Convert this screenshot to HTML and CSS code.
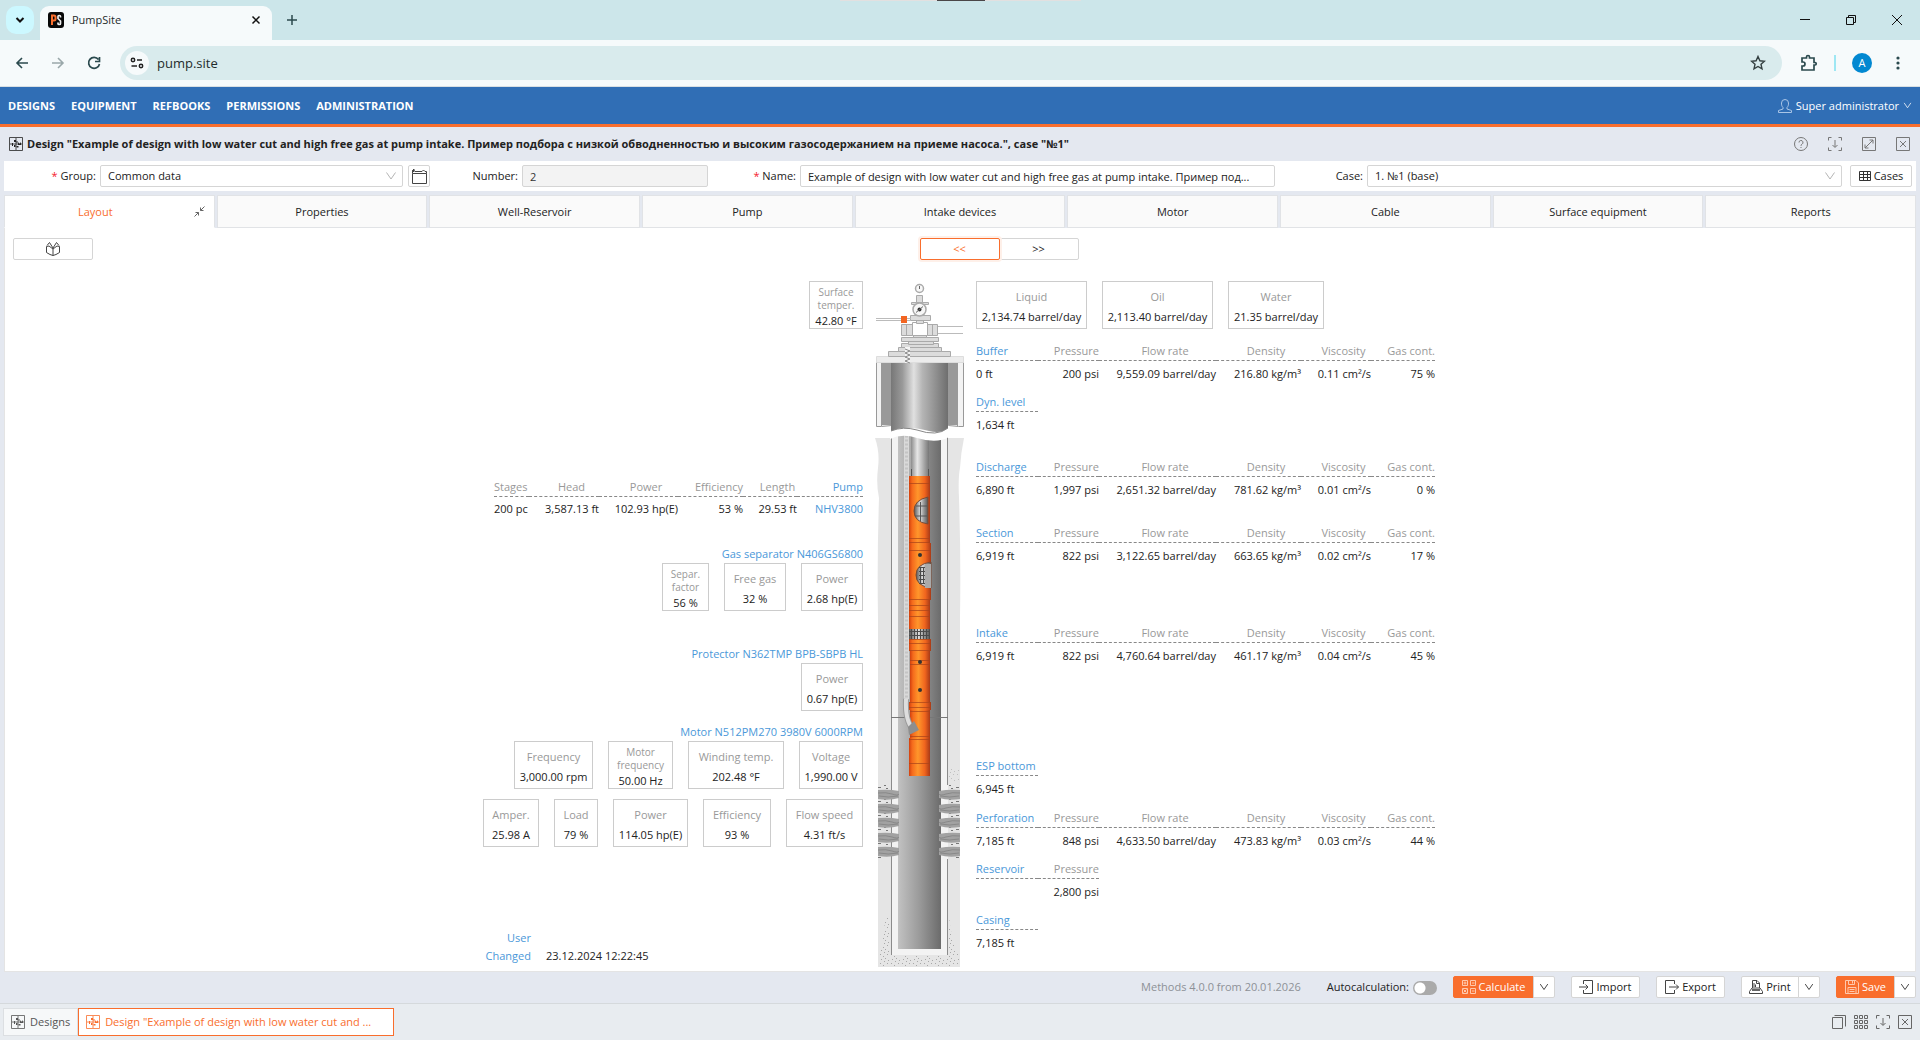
FILE: index.html
```html
<!DOCTYPE html>
<html lang="en">
<head>
<meta charset="utf-8">
<title>PumpSite</title>
<link rel="stylesheet" href="styles.css">
</head>
<body>
<svg class="defs" aria-hidden="true">
  <defs>
    <symbol id="i-design" viewBox="0 0 14 14"><path d="M.5.5h13v13H.5zM7 1v12M1 7h12" fill="none" stroke="currentColor" stroke-width=".8"/><path d="M5 3h2v2H5zM7.500 4h1v2h-1zM9 5l1.500 2L12 5v3H9zM3 6h1v3H3zM5 8h1.500v2H5zM7.500 9h2v1.500h-2z" fill="currentColor"/></symbol>
    <symbol id="i-down" viewBox="0 0 12 12"><path d="M1.500 2.500 6 9l4.500-6.500" fill="none" stroke="currentColor"/></symbol>
    <symbol id="i-minimize" viewBox="0 0 14 14"><path d="M.5 3.500v-3h3M10.500.5h3v3M13.500 10.500v3h-3M3.500 13.500h-3v-3M7 3v7M4.500 8 7 10.500 9.500 8" fill="none" stroke="currentColor"/></symbol>
    <symbol id="i-closebox" viewBox="0 0 14 14"><path d="M.5.5h13v13H.5zM4 4l6 6M10 4l-6 6" fill="none" stroke="currentColor"/></symbol>
  </defs>
</svg>

<header class="browser">
  <div class="tabstrip">
    <button class="tabsearch" aria-label="Search tabs"><svg width="10" height="10" viewBox="0 0 10 10"><path d="M1.500 3 5 6.500 8.500 3" fill="none" stroke="#111" stroke-width="2"/></svg></button>
    <div class="browsertab">
      <svg width="16" height="16" viewBox="0 0 16 16"><rect width="16" height="16" rx="3" fill="#080808"/><path d="M4 13V3.500h2a1.500 1.500 0 0 1 1.500 1.500v2A1.500 1.500 0 0 1 6 8.500H4" fill="none" stroke="#f96e2d" stroke-width="2"/><path d="M12.500 5.500V4.500a1 1 0 0 0-1-1h-.5a1 1 0 0 0-1 1v2l2.500 2.500v2.500a1 1 0 0 1-1 1H11a1 1 0 0 1-1-1v-1" fill="none" stroke="#eee" stroke-width="1.700"/></svg>
      <span class="browsertab-title">PumpSite</span>
      <svg width="10" height="10" viewBox="0 0 10 10"><path d="M1.500 1.500l7 7M8.500 1.500l-7 7" stroke="#111" stroke-width="1.500"/></svg>
    </div>
    <button class="plain" aria-label="New tab"><svg width="12" height="12" viewBox="0 0 12 12"><path d="M6 1v10M1 6h10" stroke="#2b4a4e" stroke-width="1.500"/></svg></button>
    <div class="winbuttons">
      <svg width="12" height="12" viewBox="0 0 12 12"><path d="M1 5.500h10" stroke="#111"/></svg>
      <svg width="12" height="12" viewBox="0 0 12 12"><path d="M1.500 3.500h7v7h-7zM3.500 3.500v-2h7v7h-2" fill="none" stroke="#111"/></svg>
      <svg width="12" height="12" viewBox="0 0 12 12"><path d="M1 1l10 10M11 1 1 11" stroke="#111"/></svg>
    </div>
    <div class="grabber"><span></span></div>
  </div>
  <div class="addressbar">
    <div class="navbuttons">
      <svg width="16" height="16" viewBox="0 0 16 16"><path d="M14 8H3M8 3 3 8l5 5" fill="none" stroke="#2b4a4e" stroke-width="1.600"/></svg>
      <svg width="16" height="16" viewBox="0 0 16 16"><path d="M2 8h11M8 3l5 5-5 5" fill="none" stroke="#9aa8aa" stroke-width="1.600"/></svg>
      <svg width="16" height="16" viewBox="0 0 16 16"><path d="M12.500 4.500A5.500 5.500 0 1 0 13.500 9M13.500 2v4.500H9" fill="none" stroke="#2b4a4e" stroke-width="1.700"/></svg>
    </div>
    <div class="omnibox">
      <span class="siteinfo"><svg width="14" height="12" viewBox="0 0 14 12"><g fill="none" stroke="#222" stroke-width="1.500"><circle cx="3" cy="3" r="1.700"/><path d="M7 3h5M1.500 9H7"/><circle cx="11" cy="9" r="1.700"/></g></svg></span>
      <span class="url">pump.site</span>
      <svg width="16" height="16" viewBox="0 0 16 16"><path d="M8 1.500l1.900 4.300 4.600.4-3.500 3.100 1 4.600L8 11.500l-4 2.400 1-4.600L1.500 6.200l4.600-.4z" fill="none" stroke="#333f40" stroke-width="1.400"/></svg>
    </div>
    <div class="extras">
      <svg width="18" height="18" viewBox="0 0 18 18"><path d="M2 4h4.500V3a1.500 1.500 0 0 1 3 0v1H14v4.500h1a1.200 1.200 0 0 1 0 2.500h-1V16H2v-4h1a1.800 1.800 0 0 0 0-4H2z" fill="none" stroke="#2b4a4e" stroke-width="1.700"/></svg>
      <span class="extras-line"></span>
      <span class="avatar">A</span>
      <svg width="6" height="14" viewBox="0 0 6 14"><g fill="#2b4a4e"><circle cx="3" cy="2" r="1.600"/><circle cx="3" cy="7" r="1.600"/><circle cx="3" cy="12" r="1.600"/></g></svg>
    </div>
  </div>
</header>

<nav class="mainnav">
  <a href="#">DESIGNS</a><a href="#">EQUIPMENT</a><a href="#">REFBOOKS</a><a href="#">PERMISSIONS</a><a href="#">ADMINISTRATION</a>
  <button class="user"><svg width="14" height="14" viewBox="0 0 14 14"><path d="M5 8.500C3.500 7 3.500 5.500 3.500 4a3.500 3.500 0 0 1 7 0c0 1.500 0 3-1.500 4.500v1.500l4.500 1.500v2H.5v-2L5 10z" fill="none" stroke="#a9c5e6"/></svg>Super administrator<svg width="9" height="9" viewBox="0 0 12 12"><use href="#i-down"/></svg></button>
</nav>

<main class="window">
  <div class="titlebar">
    <svg width="14" height="14"><use href="#i-design"/></svg>
    <h1>Design "Example of design with low water cut and high free gas at pump intake. Пример подбора с низкой обводненностью и высоким газосодержанием на приеме насоса.", case "№1"</h1>
    <div class="titleicons">
      <button class="plain" aria-label="Help"><svg width="14" height="14" viewBox="0 0 14 14"><circle cx="7" cy="7" r="6.500" fill="none" stroke="currentColor"/><path d="M5 5.500a2 2 0 1 1 3 1.700c-.8.500-1 .8-1 1.600M7 10v1" fill="none" stroke="currentColor"/></svg></button>
      <button class="plain" aria-label="Minimize"><svg width="14" height="14"><use href="#i-minimize"/></svg></button>
      <button class="plain" aria-label="Restore"><svg width="14" height="14" viewBox="0 0 14 14"><path d="M.5.500h13v13H.5zM3 11l8-8M7.500 3H11v3.500M3 7.500V11h3.500" fill="none" stroke="currentColor"/></svg></button>
      <button class="plain" aria-label="Close"><svg width="14" height="14"><use href="#i-closebox"/></svg></button>
    </div>
  </div>

  <form class="fields">
    <div class="field field-group">
      <label for="group"><span class="required">*</span> Group:</label>
      <span class="select"><select id="group"><option>Common data</option></select><svg width="12" height="12"><use href="#i-down"/></svg></span>
      <button type="button" class="btn btn-square" aria-label="Open group"><svg width="15" height="15" viewBox="0 0 15 15"><path d="M.5 4.500h14v10H.5zM.5 4.500v-3h2M.5 1.500 2 0v3zM3 2.500h7l1.500-1.500L13 2.500h1.500v2" fill="none" stroke="#444"/></svg></button>
    </div>
    <div class="field field-number"><label for="number">Number:</label><input id="number" value="2" disabled></div>
    <div class="field field-wide"><label for="name"><span class="required">*</span> Name:</label><input id="name" value="Example of design with low water cut and high free gas at pump intake. Пример под..."></div>
    <div class="field field-wide"><label for="case">Case:</label><span class="select"><select id="case"><option>1. №1 (base)</option></select><svg width="12" height="12"><use href="#i-down"/></svg></span></div>
    <button type="button" class="btn btn-cases"><svg width="12" height="12" viewBox="0 0 12 12"><path d="M.5 1.500h11v9H.5zM.5 4.500h11M.5 7.500h11M4.500 1.500v9M8.500 1.500v9" fill="none" stroke="#333"/></svg>Cases</button>
  </form>

  <div class="tabs">
    <button class="tab tab-active">Layout<svg width="11" height="11" viewBox="0 0 11 11"><path d="M10.500.5 6.500 4.500M6.500 1.500v3H9.500M.5 10.500l4-4M1.500 6.500h3V9.500" fill="none" stroke="#666"/></svg></button>
    <button class="tab">Properties</button>
    <button class="tab">Well-Reservoir</button>
    <button class="tab">Pump</button>
    <button class="tab">Intake devices</button>
    <button class="tab">Motor</button>
    <button class="tab">Cable</button>
    <button class="tab">Surface equipment</button>
    <button class="tab">Reports</button>
  </div>

  <section class="panel">
    <div class="viewbar">
      <button class="btn btn-view" aria-label="Box view"><svg width="14" height="14" viewBox="0 0 14 14"><path d="M.5 4.500 3 4l4 3 4-3 2.500.5v6L10 12.500 7 13.500l-3-1L.5 10.500zM7 6.500v7M1 3.500 3.500.5 7 6l3.500-5.500 2.500 3" fill="none" stroke="#444"/></svg></button>
      <div class="pager"><button class="btn btn-view btn-on">&lt;&lt;</button><button class="btn btn-view btn-next">&gt;&gt;</button></div>
    </div>

    <div class="scheme">
      <div class="left">
        <div class="row row-surface"><div class="box"><small>Surface temper.</small><b>42.80 °F</b></div></div>

        <table class="data data-pump">
          <colgroup><col class="p1"><col class="p2"><col class="p3"><col class="p4"><col class="p5"><col class="p6"></colgroup>
          <thead><tr><th>Stages</th><th>Head</th><th>Power</th><th class="r">Efficiency</th><th>Length</th><th class="r name">Pump</th></tr></thead>
          <tbody><tr><td>200 pc</td><td>3,587.13 ft</td><td>102.93 hp(E)</td><td>53 %</td><td>29.53 ft</td><td><a href="#">NHV3800</a></td></tr></tbody>
        </table>

        <h2 class="part part-separator">Gas separator N406GS6800</h2>
        <div class="row row-separator">
          <div class="box"><small>Separ. factor</small><b>56 %</b></div>
          <div class="box"><span>Free gas</span><b>32 %</b></div>
          <div class="box"><span>Power</span><b>2.68 hp(E)</b></div>
        </div>

        <h2 class="part part-protector">Protector N362TMP BPB-SBPB HL</h2>
        <div class="row row-protector"><div class="box"><span>Power</span><b>0.67 hp(E)</b></div></div>

        <h2 class="part part-motor">Motor N512PM270 3980V 6000RPM</h2>
        <div class="row row-motor">
          <div class="box"><span>Frequency</span><b>3,000.00 rpm</b></div>
          <div class="box"><small>Motor frequency</small><b>50.00 Hz</b></div>
          <div class="box"><span>Winding temp.</span><b>202.48 °F</b></div>
          <div class="box"><span>Voltage</span><b>1,990.00 V</b></div>
        </div>
        <div class="row row-load">
          <div class="box"><span>Amper.</span><b>25.98 A</b></div>
          <div class="box"><span>Load</span><b>79 %</b></div>
          <div class="box"><span>Power</span><b>114.05 hp(E)</b></div>
          <div class="box"><span>Efficiency</span><b>93 %</b></div>
          <div class="box"><span>Flow speed</span><b>4.31 ft/s</b></div>
        </div>

        <dl class="meta"><dt>User</dt><dd></dd><dt>Changed</dt><dd>23.12.2024 12:22:45</dd></dl>
      </div>

      <svg class="well" width="92" height="687" viewBox="875 282 92 687" role="img" aria-label="Well scheme">
        <defs>
          <linearGradient id="g-tube"><stop offset="0" stop-color="#777"/><stop offset=".2" stop-color="#999"/><stop offset=".4" stop-color="#e0e0e0"/><stop offset=".55" stop-color="#b5b5b5"/><stop offset="1" stop-color="#6e6e6e"/></linearGradient>
          <linearGradient id="g-casing"><stop offset="0" stop-color="#c2c2c2"/><stop offset=".5" stop-color="#9a9a9a"/><stop offset="1" stop-color="#6b6b6b"/></linearGradient>
          <linearGradient id="g-pipe"><stop offset="0" stop-color="#8c8c8c"/><stop offset=".35" stop-color="#e6e6e6"/><stop offset=".6" stop-color="#bdbdbd"/><stop offset="1" stop-color="#777"/></linearGradient>
          <linearGradient id="g-orange"><stop offset="0" stop-color="#d2400e"/><stop offset=".15" stop-color="#f56a1c"/><stop offset=".42" stop-color="#ff962b"/><stop offset=".75" stop-color="#f0651e"/><stop offset="1" stop-color="#a83a17"/></linearGradient>
          <linearGradient id="g-metal"><stop offset="0" stop-color="#555"/><stop offset=".45" stop-color="#ddd"/><stop offset=".7" stop-color="#999"/><stop offset="1" stop-color="#555"/></linearGradient>
          <pattern id="p-sand" width="11" height="9" patternUnits="userSpaceOnUse"><path d="M1 1h1v1H1zM4 3h1v1H4zM8 1h1v1H8zM6 5h1v1H6zM2 6h1v1H2zM9 7h1v1H9zM5 8h1v1H5z" fill="#a8a8a8"/></pattern>
          <pattern id="p-rock" width="13" height="7" patternUnits="userSpaceOnUse"><path d="M1 2h2v1H1zM5 1h1v1H5zM8 4h3v1H8zM10 1h1v1h-1zM3 5h2v1H3z" fill="#777"/></pattern>
          <pattern id="p-cable" width="5" height="4" patternUnits="userSpaceOnUse"><path d="M0 0h5v4H0z" fill="#d9d9d9"/><path d="M1 .5h3v2H1z" fill="#c4c4c4"/></pattern>
          <pattern id="p-mesh" width="3" height="4" patternUnits="userSpaceOnUse"><path d="M0 0h1v4H0zM0 0h3v1H0z" fill="#4b4b4b"/></pattern>
          <g id="slits" fill="#a2a2a2"><path d="M879 791q11-1 21 1v7q-10 3-21 1z"/><path d="M879 794q8-1 14 1t7 0M880 797q9 2 19 0" fill="none" stroke="#777" stroke-width=".6"/></g>
        </defs>
        <path d="M876 439q5 14 3 30t1 30q-2 60-1 120v349h82V619q1-60-1-120-1-20 1-30 1-16 4-30z" fill="#e5e5e5"/>
        <path d="M879 968v-12q6-10 7-38h5v38h59v-38q3 28 11 38v12z" fill="url(#p-sand)"/>
        <path d="M879 786h14v73h-14zM948 786h13v73h-13z" fill="url(#p-rock)"/>
        <path d="M950 770h11v12h-11z" fill="url(#p-sand)" opacity=".6"/>
        <rect x="892" y="436" width="57" height="520" fill="#f3f3f3"/>
        <path d="M892.500 436v520M948.500 436v350M948.500 860v96" stroke="#8b8b8b"/>
        <rect x="899" y="436" width="43" height="514" fill="url(#g-casing)"/>
        <path d="M892 718.500h57" stroke="#777"/>
        <use href="#slits"/><use href="#slits" y="14"/><use href="#slits" y="28"/><use href="#slits" y="43"/><use href="#slits" y="57"/>
        <g transform="matrix(-1 0 0 1 1840 0)"><use href="#slits"/><use href="#slits" y="14"/><use href="#slits" y="28"/><use href="#slits" y="43"/><use href="#slits" y="57"/></g>
        <rect x="905" y="436" width="5" height="268" fill="url(#p-cable)"/>
        <rect x="912" y="436" width="18" height="41" fill="url(#g-pipe)"/>
        <path d="M912.500 470v7M929.500 470v7" stroke="#555"/>

        <g fill="url(#g-orange)">
          <path d="M910 477h21v67h-21z"/>
          <path d="M910 544h22v57h-22z"/>
          <rect x="910" y="601" width="21" height="30"/>
          <rect x="910" y="640" width="22" height="12"/>
          <rect x="911" y="652" width="20" height="51"/>
          <rect x="910" y="703" width="22" height="8"/>
          <path d="M911 711h20v29h-20z"/>
          <rect x="910" y="739" width="21" height="38"/>
        </g>
        <path d="M929 498v27q-14-2-14-13t14-14z" fill="url(#g-metal)" stroke="#7a4a35"/>
        <path d="M917 507h11M916 517h12M921.500 503v19" stroke="#555" fill="none"/>
        <path d="M932 563v26q-15-2-15-13t15-13z" fill="url(#g-metal)" stroke="#7a4a35"/>
        <path d="M926 565h6v24h-6z" fill="#aaa"/><path d="M920 568h6v17h-6z" fill="url(#p-mesh)"/>
        <path d="M910 484.500h21M910 539.500h21M910 543.500h21M910 551.500h22M910 600.500h22M910 606.500h21M910 611.500h21M910 617.500h21M910 640.500h22M910 644.500h22M910 651.500h22M911 661.500h20M911 665.500h20M910 703.500h22M910 708.500h22M911 712.500h20M911 737.500h20M910 740.500h21M910 764.500h21" stroke="#a8431a" opacity=".7"/>
        <rect x="910" y="630" width="21" height="10" fill="url(#g-metal)"/><rect x="910" y="630" width="21" height="10" fill="url(#p-mesh)"/>
        <g fill="#333"><circle cx="921" cy="556" r="2"/><circle cx="921" cy="663" r="2"/><circle cx="921" cy="691" r="2"/></g>
        <path d="M907 700q-1 22 7 30" fill="none" stroke="#999" stroke-width="6"/><path d="M907 700q-1 22 7 30" fill="none" stroke="#ddd" stroke-width="4"/>
        <path d="M909 728l6-6 5 9-10 5z" fill="#8e8e8e"/>

        <path d="M877.500 363.500h87v64h-5l-10-1h-57l-10 1h-5z" fill="#f3f3f3" stroke="#999"/>
        <path d="M883 364h9v62h-9zM949 364h9v62h-9z" fill="#999"/>
        <path d="M882.500 364v63M958.500 364v63" stroke="#999"/>
        <path d="M892 363h57v66q-7 6-19 3-22-6-38 0z" fill="url(#g-tube)"/>
        <path d="M891 433q12-7 27-2 20 7 32-2v9q-12 7-32 1-15-5-27 1z" fill="#fff"/>
        <path d="M892 432q12-5 26-1 20 7 31-2" fill="none" stroke="#888"/>

        <g fill="#dcdcdc" stroke="#aaa">
          <path d="M877.500 357.500h87v6h-87z" fill="#ececec" stroke="#ddd"/>
          <path d="M889.500 352.500h62v5h-62z"/><path d="M899.500 348.500h43v4h-43z"/><path d="M902.500 344.500h37v4h-37z"/><path d="M909.500 342.500h25v3h-25z"/><path d="M902.500 338.500h37v4h-37z"/>
          <path d="M914.500 334.500h13v4h-13z"/><path d="M902.500 325.500h11v11h-11zM928.500 325.500h10v11h-10z"/><path d="M907.500 325v11M933.500 325v11"/><path d="M913.500 323.500h15v13h-15z" fill="#fff"/>
          <path d="M917.500 320.500h7v4h-7z"/><path d="M911.500 316.500h20v5h-20z"/><path d="M912.500 303.500h17v2h-17z"/><path d="M917.500 296.500h6v7h-6z"/>
          <circle cx="920.500" cy="310.500" r="6.500" fill="#f7f7f7" stroke-width="1.500"/><circle cx="920.500" cy="289.500" r="4" fill="#f7f7f7" stroke-width="1.500"/>
        </g>
        <path d="M939 327.500h25M939 334.500h25M877 319.500h25M877 321.500h25M908 319.500h4M908 321.500h4" stroke="#bbb"/>
        <path d="M902 317h6v7h-6z" fill="#f26522"/>
        <circle cx="920.500" cy="310.500" r="2" fill="#333"/><path d="M917 313.500l7-6M920.500 290v-3" stroke="#666"/>
        <path d="M906 348h5v16h-5z" fill="#f5f5f5"/><path d="M906 350l5 2-5 2 5 2-5 2 5 2-5 2 5 2" fill="none" stroke="#888"/>
      </svg>

      <div class="right">
        <div class="row row-rates">
          <div class="box"><span>Liquid</span><b>2,134.74 barrel/day</b></div>
          <div class="box"><span>Oil</span><b>2,113.40 barrel/day</b></div>
          <div class="box"><span>Water</span><b>21.35 barrel/day</b></div>
        </div>

        <table class="data data-node node-buffer">
          <colgroup><col class="n1"><col class="n2"><col class="n3"><col class="n4"><col class="n5"><col class="n6"></colgroup>
          <thead><tr><th class="name">Buffer</th><th class="r">Pressure</th><th>Flow rate</th><th>Density</th><th>Viscosity</th><th class="r">Gas cont.</th></tr></thead>
          <tbody><tr><td>0 ft</td><td>200 psi</td><td>9,559.09 barrel/day</td><td>216.80 kg/m³</td><td>0.11 cm²/s</td><td>75 %</td></tr></tbody>
        </table>
        <table class="data data-short">
          <thead><tr><th class="name">Dyn. level</th></tr></thead><tbody><tr><td>1,634 ft</td></tr></tbody>
        </table>
        <table class="data data-node node-discharge">
          <colgroup><col class="n1"><col class="n2"><col class="n3"><col class="n4"><col class="n5"><col class="n6"></colgroup>
          <thead><tr><th class="name">Discharge</th><th class="r">Pressure</th><th>Flow rate</th><th>Density</th><th>Viscosity</th><th class="r">Gas cont.</th></tr></thead>
          <tbody><tr><td>6,890 ft</td><td>1,997 psi</td><td>2,651.32 barrel/day</td><td>781.62 kg/m³</td><td>0.01 cm²/s</td><td>0 %</td></tr></tbody>
        </table>
        <table class="data data-node node-section">
          <colgroup><col class="n1"><col class="n2"><col class="n3"><col class="n4"><col class="n5"><col class="n6"></colgroup>
          <thead><tr><th class="name">Section</th><th class="r">Pressure</th><th>Flow rate</th><th>Density</th><th>Viscosity</th><th class="r">Gas cont.</th></tr></thead>
          <tbody><tr><td>6,919 ft</td><td>822 psi</td><td>3,122.65 barrel/day</td><td>663.65 kg/m³</td><td>0.02 cm²/s</td><td>17 %</td></tr></tbody>
        </table>
        <table class="data data-node node-intake">
          <colgroup><col class="n1"><col class="n2"><col class="n3"><col class="n4"><col class="n5"><col class="n6"></colgroup>
          <thead><tr><th class="name">Intake</th><th class="r">Pressure</th><th>Flow rate</th><th>Density</th><th>Viscosity</th><th class="r">Gas cont.</th></tr></thead>
          <tbody><tr><td>6,919 ft</td><td>822 psi</td><td>4,760.64 barrel/day</td><td>461.17 kg/m³</td><td>0.04 cm²/s</td><td>45 %</td></tr></tbody>
        </table>
        <table class="data data-short node-bottom">
          <thead><tr><th class="name">ESP bottom</th></tr></thead><tbody><tr><td>6,945 ft</td></tr></tbody>
        </table>
        <table class="data data-node">
          <colgroup><col class="n1"><col class="n2"><col class="n3"><col class="n4"><col class="n5"><col class="n6"></colgroup>
          <thead><tr><th class="name">Perforation</th><th class="r">Pressure</th><th>Flow rate</th><th>Density</th><th>Viscosity</th><th class="r">Gas cont.</th></tr></thead>
          <tbody><tr><td>7,185 ft</td><td>848 psi</td><td>4,633.50 barrel/day</td><td>473.83 kg/m³</td><td>0.03 cm²/s</td><td>44 %</td></tr></tbody>
        </table>
        <table class="data data-pair">
          <colgroup><col class="n1"><col class="n2"></colgroup>
          <thead><tr><th class="name">Reservoir</th><th class="r">Pressure</th></tr></thead><tbody><tr><td></td><td>2,800 psi</td></tr></tbody>
        </table>
        <table class="data data-short">
          <thead><tr><th class="name">Casing</th></tr></thead><tbody><tr><td>7,185 ft</td></tr></tbody>
        </table>
      </div>
    </div>
  </section>

  <footer class="actions">
    <span class="version">Methods 4.0.0 from 20.01.2026</span>
    <label class="auto">Autocalculation: <input type="checkbox" role="switch"></label>
    <div class="split split-primary"><button class="btn btn-calc"><svg width="14" height="14" viewBox="0 0 14 14"><path d="M.5.5h5v5h-5zM8.500.5h5v5h-5zM.5 8.500h5v5h-5zM8.500 8.500h5v5h-5zM3 1.500v3M1.500 3h3M10 3h2.500M1.500 9.500l3 3M4.500 9.500l-3 3M10 11h2.500" fill="none" stroke="#ffc9ae"/></svg>Calculate</button><button class="btn btn-drop" aria-label="Calculate options"><svg width="10" height="10" viewBox="0 0 12 12"><use href="#i-down"/></svg></button></div>
    <button class="btn btn-action"><svg width="14" height="14" viewBox="0 0 14 14"><path d="M4.500 4V.5h9v13h-9V10M0 7h9M6.500 4.500 9 7 6.500 9.500" fill="none" stroke="#444"/></svg>Import</button>
    <button class="btn btn-action"><svg width="14" height="14" viewBox="0 0 14 14"><path d="M9.500 4V.5h-9v13h9V10M4 7h9.500M11 4.500 13.500 7 11 9.500" fill="none" stroke="#444"/></svg>Export</button>
    <div class="split"><button class="btn btn-print"><svg width="14" height="14" viewBox="0 0 14 14"><path d="M3.500 8V.5H8L10.500 3v5M7.500.5V3.500h3M.5 11.500 3 8h8l2.500 3.500v2H.5zM5 3v4M6.500 4.500V7" fill="none" stroke="#444"/><path d="M3 9h8v2H3z" fill="#666"/></svg>Print</button><button class="btn btn-drop" aria-label="Print options"><svg width="10" height="10" viewBox="0 0 12 12"><use href="#i-down"/></svg></button></div>
    <div class="split split-primary"><button class="btn btn-save"><svg width="14" height="14" viewBox="0 0 14 14"><path d="M.5.500H11l2.500 2.500v10.500H.5zM3.500.5v4h6v-4M7.500 1v2.500M3 7.500h8v6H3zM4.500 9.500h5M4.500 11.500h5" fill="none" stroke="#ffc9ae"/></svg>Save</button><button class="btn btn-drop" aria-label="Save options"><svg width="10" height="10" viewBox="0 0 12 12"><use href="#i-down"/></svg></button></div>
  </footer>
</main>

<div class="taskbar">
  <button class="task"><svg width="14" height="14"><use href="#i-design"/></svg>Designs</button>
  <button class="task task-active"><svg width="14" height="14"><use href="#i-design"/></svg><span>Design "Example of design with low water cut and ...</span></button>
  <div class="taskicons">
    <button class="plain" aria-label="Windows"><svg width="14" height="14" viewBox="0 0 14 14"><path d="M.5 2.500h10v11H.5zM2.500.5h11v11" fill="none" stroke="currentColor"/></svg></button>
    <button class="plain" aria-label="Tile"><svg width="14" height="14" viewBox="0 0 14 14"><path d="M.5.5h3v3h-3zM5.500.5h3v3h-3zM10.500.5h3v3h-3zM.5 5.500h3v3h-3zM5.500 5.500h3v3h-3zM10.500 5.500h3v3h-3zM.5 10.500h3v3h-3zM5.500 10.500h3v3h-3zM10.500 10.500h3v3h-3z" fill="none" stroke="currentColor"/></svg></button>
    <button class="plain" aria-label="Minimize all"><svg width="14" height="14"><use href="#i-minimize"/></svg></button>
    <button class="plain" aria-label="Close all"><svg width="14" height="14"><use href="#i-closebox"/></svg></button>
  </div>
</div>
</body>
</html>
```
FILE: styles.css
```css
* { box-sizing: border-box; }

body {
  margin: 0;
  min-height: 100vh;
  display: flex;
  flex-direction: column;
  background: #e4e8f0;
  color: #222;
  font: 11px/16px "Open Sans", "Noto Sans", sans-serif;
}

button, input, select { font: inherit; color: inherit; }
button { cursor: pointer; }
svg { flex: none; display: block; }
.defs { position: absolute; width: 0; height: 0; }
.plain { border: 0; padding: 0; background: none; }

/* Browser frame */
.browser { color: #1f2b2c; }
.tabstrip { position: relative; display: flex; align-items: center; height: 40px; padding: 0 17px 0 6px; background: #cce6ea; }
.tabsearch { display: flex; align-items: center; justify-content: center; width: 28px; height: 28px; border: 0; padding: 0; border-radius: 10px; background: #ccf8ff; }
.browsertab { align-self: flex-end; display: flex; align-items: center; width: 232px; height: 34px; margin: 0 14px 0 6px; padding: 0 11px 6px 8px; border-radius: 9px 9px 0 0; background: #f6fafb; }
.browsertab-title { flex: 1; margin-left: 8px; }
.winbuttons { display: flex; gap: 34px; margin-left: auto; }
.grabber { position: absolute; top: 0; left: 50%; width: 241px; height: 1px; margin-left: -120px; background: #e2e0e0; }
.grabber span { display: block; width: 48px; height: 1px; margin: 0 auto; background: #4a4648; }
.addressbar { display: flex; align-items: center; height: 47px; padding: 0 19px 1px 14px; border-bottom: 1px solid #d8dfe3; background: #f6fafb; }
.navbuttons { display: flex; gap: 20px; width: 106px; }
.omnibox { flex: 1; display: flex; align-items: center; height: 34px; padding: 0 16px 0 5px; border-radius: 17px; background: #d9ebed; }
.siteinfo { display: flex; align-items: center; justify-content: center; width: 24px; height: 24px; border-radius: 50%; background: #f6fafb; }
.url { flex: 1; margin-left: 8px; font-size: 13px; }
.extras { display: flex; align-items: center; margin-left: 18px; }
.extras-line { width: 2px; height: 16px; margin: 0 16px; background: #9ee7f3; }
.avatar { width: 20px; height: 20px; margin-right: 23px; border-radius: 50%; background: #0288d1; color: #fff; line-height: 20px; text-align: center; }

/* Main navigation */
.mainnav { display: flex; align-items: center; gap: 16px; height: 40px; padding: 0 8px; border-bottom: 3px solid #f96e2d; background: #306eb5; color: #fff; }
.mainnav a { color: #fff; font-weight: 700; text-decoration: none; }
.user { display: flex; align-items: center; gap: 4px; margin-left: auto; border: 0; padding: 0; background: none; }

/* Design window */
.window { flex: 1; display: flex; flex-direction: column; padding: 0 4px; }
.titlebar { display: flex; align-items: center; height: 34px; padding: 0 6px 0 5px; }
.titlebar h1 { margin: 0 0 0 4px; font-size: 11px; line-height: 16px; font-weight: 700; white-space: nowrap; }
.titleicons { display: flex; gap: 20px; margin-left: auto; color: #777; }

.fields { display: flex; align-items: center; height: 30px; padding-right: 4px; background: #fff; }
.field { display: flex; align-items: center; min-width: 0; }
.field label { flex: none; width: 92px; padding-right: 4px; text-align: right; }
.field input, .field select { display: block; width: 100%; min-width: 0; height: 22px; margin: 0; padding: 0 7px; border: 1px solid #d5d5d5; border-radius: 2px; background: #fff; text-overflow: ellipsis; }
.field input:disabled { background: #f3f3f3; color: #333; }
.field select { appearance: none; }
.field-group { flex: 426 1 0; }
.field-group label { width: 96px; }
.field-number { flex: 278 1 0; }
.field-wide { flex: 567 1 0; }
.select { position: relative; flex: 1; }
.select svg { position: absolute; right: 6px; top: 5px; color: #b5b5b5; pointer-events: none; }
.required { color: #f5222d; }

.btn { display: flex; align-items: center; justify-content: center; gap: 3px; height: 22px; padding: 0; border: 1px solid #d5d5d5; border-radius: 2px; background: #fff; white-space: nowrap; }
.btn-square { width: 22px; margin-left: 5px; }
.btn-cases { width: 62px; margin-left: 8px; }

.tabs { display: grid; grid-auto-flow: column; grid-auto-columns: minmax(0, 1fr); gap: 2px; margin-top: 4px; }
.tab { position: relative; height: 33px; padding: 0; border: 1px solid #e1e3e6; background: #fafafa; }
.tab-active { padding: 0 28px 0 0; border-bottom-color: #fff; background: #fff; color: #f96e2d; }
.tab-active svg { position: absolute; top: 10px; right: 9px; }

.panel { flex: 1; padding: 10px 10px 3px 8px; border: 1px solid #e4e4e4; border-top: 0; background: #fff; }
.viewbar { display: flex; }
.btn-view { width: 80px; }
.pager { flex: 1; display: flex; justify-content: center; }
.btn-on { z-index: 1; border-color: #f96e2d; color: #f96e2d; box-shadow: 0 0 0 2px #fef0e9; }
.btn-next { margin-left: -1px; }

/* Well scheme */
.scheme { display: grid; grid-template-columns: 380px 93px 459px; column-gap: 10px; justify-content: center; margin-top: 21px; }
.well { justify-self: end; }
.row { display: grid; justify-content: end; gap: 15px; }
.box { display: flex; flex-direction: column; align-items: center; height: 48px; padding-top: 7px; border: 1px solid #ccc; text-align: center; white-space: nowrap; }
.box span { margin-bottom: 4px; color: #999; }
.box small { width: min-content; margin: -3px 0 1px; color: #999; font-size: 10px; line-height: 13px; white-space: normal; }
.box b { font-weight: 400; }
.row-surface { grid-template-columns: 54px; }
.row-separator { grid-template-columns: 47px 62px 62px; }
.row-protector { grid-template-columns: 62px; }
.row-motor { grid-template-columns: 79px 65px 96px 64px; }
.row-load { grid-template-columns: 56px 44px 75px 68px 77px; margin-top: 10px; }
.row-rates { grid-template-columns: 111px 111px 96px; justify-content: start; }

.part { margin: 0; padding-bottom: 1px; color: #4a98d9; font-size: 11px; line-height: 16px; font-weight: 400; text-align: right; }
.part-separator { margin-top: 29px; }
.part-protector { margin-top: 35px; }
.part-motor { margin-top: 13px; }

.data { table-layout: fixed; border-collapse: separate; border-spacing: 0; white-space: nowrap; }
.data th { height: 18px; padding: 0 0 1px 15px; border-bottom: 1px dashed #888; color: #999; font-weight: 400; text-align: center; }
.data td { height: 33px; padding: 5px 0 12px; text-align: right; }
.data .r { text-align: right; }
.data th:first-child, .data td:first-child { padding-left: 0; text-align: left; }
.data .name { color: #4a98d9; }
.data a { color: #4a98d9; text-decoration: none; }
.data-pump { width: 369px; margin: 150px 0 0 auto; }
.data-pump td { height: 20px; padding: 4px 0 0; }
.p1 { width: 35px; } .p2 { width: 70px; } .p3 { width: 79px; }
.p4 { width: 65px; } .p5 { width: 54px; } .p6 { width: 66px; }
.data-node { width: 459px; }
.data-pair { width: 123px; }
.data-short { width: 62px; }
.n1 { width: 62px; } .n2 { width: 61px; } .n3 { width: 117px; }
.n4 { width: 85px; } .n5 { width: 70px; } .n6 { width: 64px; }
.node-buffer { margin-top: 14px; }
.node-discharge { margin-top: 14px; }
.node-section { margin-top: 15px; }
.node-intake { margin-top: 49px; }
.node-bottom { margin: 82px 0 1px; }

.meta { display: grid; grid-template-columns: 48px 1fr; column-gap: 15px; row-gap: 2px; margin: 83px 0 0; }
.meta dt { color: #4a98d9; text-align: right; }
.meta dd { margin: 0; }

/* Actions */
.actions { display: flex; align-items: center; justify-content: flex-end; gap: 16px; height: 31px; padding-bottom: 1px; }
.version { margin-right: 10px; color: #8d9197; }
.auto { display: flex; align-items: center; gap: 4px; }
.auto input { appearance: none; width: 24px; height: 14px; margin: 2px 0 0; border-radius: 7px; background: radial-gradient(circle at 7px 7px, #fff 5px, #aaa 6px); }
.split { display: flex; }
.split .btn:first-child { border-radius: 2px 0 0 2px; }
.btn-drop { width: 22px; margin-left: -1px; border-radius: 0 2px 2px 0; }
.btn-action { width: 69px; }
.btn-calc { width: 81px; }
.btn-print { width: 58px; }
.btn-save { width: 59px; }
.split-primary .btn:first-child { border-color: #f96e2d; background: #f96e2d; color: #fff; }

/* Task bar */
.taskbar { display: flex; align-items: center; height: 37px; padding: 0 8px 0 3px; border-top: 1px solid #d5d9dc; background: #e8ecf0; }
.task { display: flex; align-items: center; gap: 5px; height: 28px; padding: 0 7px; border: 1px solid #dcdfe2; background: #f6f8f9; color: #555; white-space: nowrap; }
.task-active { width: 316px; border-color: #f96e2d; background: #fff; color: #f96e2d; }
.taskicons { display: flex; gap: 8px; margin-left: auto; color: #666; }
```
